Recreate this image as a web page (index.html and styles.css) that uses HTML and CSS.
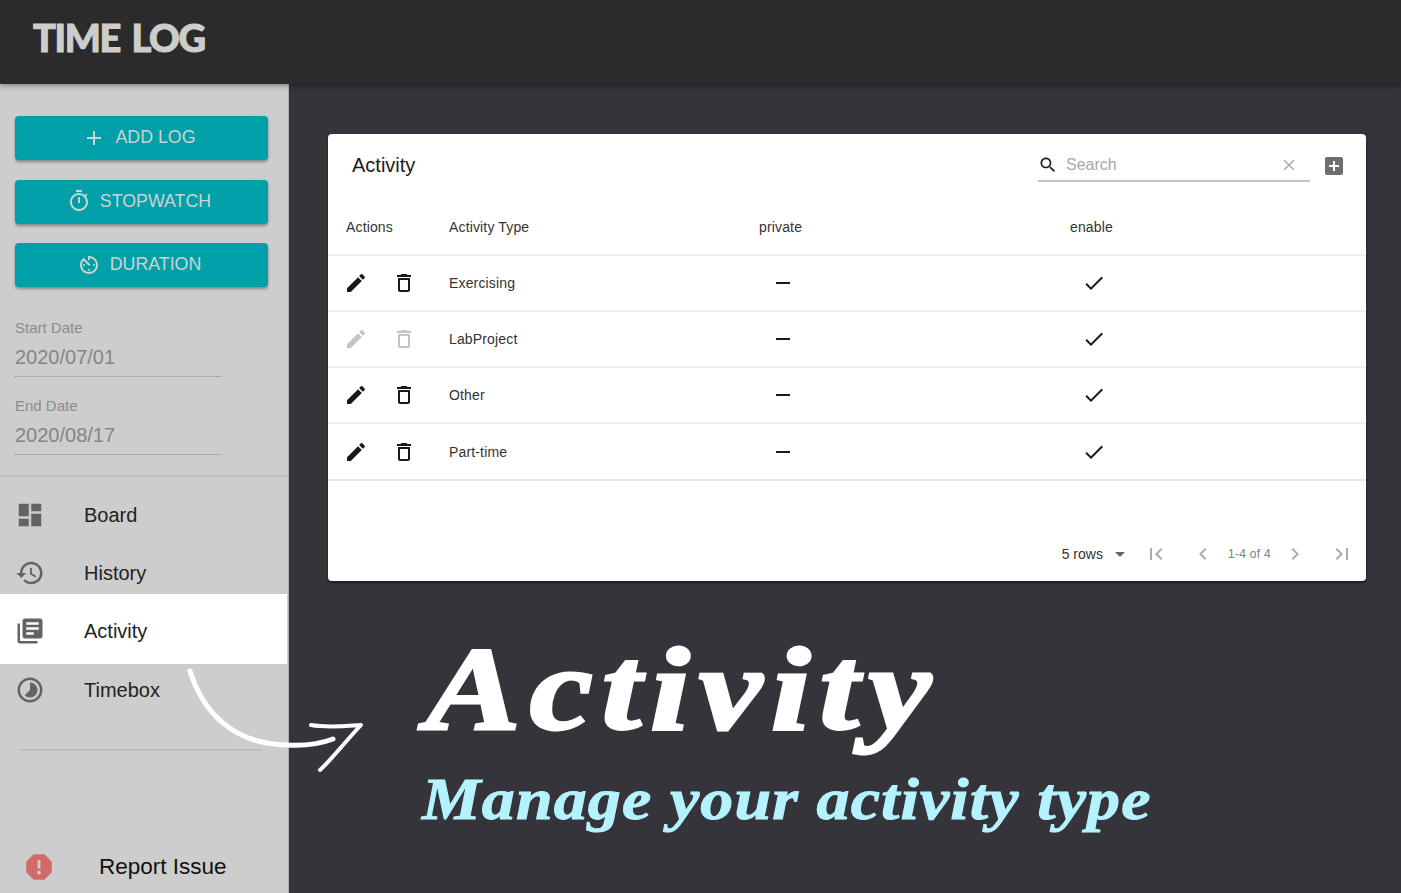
FILE: index.html
```html
<!DOCTYPE html>
<html lang="en">
<head>
  <meta charset="UTF-8" />
  <meta name="viewport" content="width=device-width, initial-scale=1.0" />
  <title>Time Log</title>
  <link rel="stylesheet" href="styles.css">
</head>
<body>
  <header class="topbar">
    <div class="logo">TIME LOG</div>
  </header>

  <div class="layout">
    <aside class="sidebar">
      <div class="actions">
        <button class="action-btn">
          <svg class="btn-icon" viewBox="0 0 24 24"><path d="M19 13h-6v6h-2v-6H5v-2h6V5h2v6h6v2z"/></svg>
          ADD LOG
        </button>
        <button class="action-btn">
          <svg class="btn-icon" viewBox="0 0 24 24"><path d="M15 1H9v2h6V1zm-4 13h2V8h-2v6zm8.03-6.61l1.42-1.42c-.43-.51-.9-.99-1.41-1.41l-1.42 1.42C16.07 4.74 14.12 4 12 4c-4.97 0-9 4.03-9 9s4.02 9 9 9 9-4.03 9-9c0-2.12-.74-4.07-1.97-5.61zM12 20c-3.87 0-7-3.13-7-7s3.13-7 7-7 7 3.13 7 7-3.13 7-7 7z"/></svg>
          STOPWATCH
        </button>
        <button class="action-btn">
          <svg class="btn-icon" viewBox="0 0 24 24"><path d="M11 17c0 .55.45 1 1 1s1-.45 1-1-.45-1-1-1-1 .45-1 1zm0-14v4h2V5.08c3.39.49 6 3.39 6 6.92 0 3.87-3.13 7-7 7s-7-3.13-7-7c0-1.68.59-3.22 1.58-4.42L12 13l1.41-1.41-6.8-6.8v.02C4.42 6.45 3 9.05 3 12c0 4.97 4.02 9 9 9 4.97 0 9-4.03 9-9s-4.03-9-9-9h-1zm7 9c0-.55-.45-1-1-1s-1 .45-1 1 .45 1 1 1 1-.45 1-1zM6 12c0 .55.45 1 1 1s1-.45 1-1-.45-1-1-1-1 .45-1 1z"/></svg>
          DURATION
        </button>
      </div>

      <div class="dates">
        <div class="date-field">
          <div class="date-label">Start Date</div>
          <div class="date-value">2020/07/01</div>
        </div>
        <div class="date-field">
          <div class="date-label">End Date</div>
          <div class="date-value">2020/08/17</div>
        </div>
      </div>

      <nav class="nav">
        <div class="nav-item">
          <svg class="nav-icon" viewBox="0 0 24 24"><path d="M3 13h8V3H3v10zm0 8h8v-6H3v6zm10 0h8V11h-8v10zm0-18v6h8V3h-8z"/></svg>
          <span>Board</span>
        </div>
        <div class="nav-item">
          <svg class="nav-icon" viewBox="0 0 24 24"><path d="M13 3c-4.97 0-9 4.03-9 9H1l3.89 3.89.07.14L9 12H6c0-3.87 3.13-7 7-7s7 3.13 7 7-3.13 7-7 7c-1.93 0-3.68-.79-4.94-2.06l-1.42 1.42C8.27 19.99 10.51 21 13 21c4.97 0 9-4.03 9-9s-4.03-9-9-9zm-1 5v5l4.28 2.54.72-1.21-3.5-2.08V8H12z"/></svg>
          <span>History</span>
        </div>
        <div class="nav-item active">
          <svg class="nav-icon" viewBox="0 0 24 24"><path d="M4 6H2v14c0 1.1.9 2 2 2h14v-2H4V6zm16-4H8c-1.1 0-2 .9-2 2v12c0 1.1.9 2 2 2h12c1.1 0 2-.9 2-2V4c0-1.1-.9-2-2-2zm-1 9H9V9h10v2zm-4 4H9v-2h6v2zm4-8H9V5h10v2z"/></svg>
          <span>Activity</span>
        </div>
        <div class="nav-item">
          <svg class="nav-icon" viewBox="0 0 24 24"><path d="M16.24 7.76C15.07 6.59 13.54 6 12 6v6l-4.24 4.24c2.34 2.34 6.14 2.34 8.49 0 2.34-2.34 2.34-6.14-.01-8.48zM12 2C6.48 2 2 6.48 2 12s4.48 10 10 10 10-4.48 10-10S17.52 2 12 2zm0 18c-4.42 0-8-3.58-8-8s3.58-8 8-8 8 3.58 8 8-3.58 8-8 8z"/></svg>
          <span>Timebox</span>
        </div>
      </nav>

      <hr class="nav-rule">

      <div class="report">
        <svg class="report-icon" viewBox="0 0 24 24"><path d="M15.73 3H8.27L3 8.27v7.46L8.27 21h7.46L21 15.73V8.27L15.73 3zM12 17.3c-.72 0-1.3-.58-1.3-1.3 0-.72.58-1.3 1.3-1.3.72 0 1.3.58 1.3 1.3 0 .72-.58 1.3-1.3 1.3zm1-4.3h-2V7h2v6z"/></svg>
        <span>Report Issue</span>
      </div>
    </aside>

    <main class="content">
      <section class="card">
        <div class="toolbar">
          <h2 class="card-title">Activity</h2>
          <div class="search">
            <svg class="search-icon" viewBox="0 0 24 24"><path d="M15.5 14h-.79l-.28-.27C15.41 12.59 16 11.11 16 9.5 16 5.91 13.09 3 9.5 3S3 5.91 3 9.5 5.91 16 9.5 16c1.61 0 3.09-.59 4.23-1.57l.27.28v.79l5 4.99L20.49 19l-4.99-5zm-6 0C7.01 14 5 11.99 5 9.5S7.01 5 9.5 5 14 7.01 14 9.5 11.99 14 9.5 14z"/></svg>
            <span class="search-text">Search</span>
            <svg class="clear-icon" viewBox="0 0 24 24"><path d="M19 6.41L17.59 5 12 10.59 6.41 5 5 6.41 10.59 12 5 17.59 6.41 19 12 13.41 17.59 19 19 17.59 13.41 12z"/></svg>
          </div>
          <svg class="add-icon" viewBox="0 0 24 24"><path d="M19 3H5c-1.11 0-2 .9-2 2v14c0 1.1.89 2 2 2h14c1.1 0 2-.9 2-2V5c0-1.1-.9-2-2-2zm-2 10h-4v4h-2v-4H7v-2h4V7h2v4h4v2z"/></svg>
        </div>

        <table class="grid">
          <thead>
            <tr>
              <th class="col-actions">Actions</th>
              <th class="col-type">Activity Type</th>
              <th class="col-flag">private</th>
              <th>enable</th>
            </tr>
          </thead>
          <tbody>
            <tr>
              <td class="cell-actions">
                <svg class="icon" viewBox="0 0 24 24"><path d="M3 17.25V21h3.75L17.81 9.94l-3.75-3.75L3 17.25zM20.71 7.04c.39-.39.39-1.02 0-1.41l-2.34-2.34c-.39-.39-1.02-.39-1.41 0l-1.83 1.83 3.75 3.75 1.83-1.83z"/></svg>
                <svg class="icon" viewBox="0 0 24 24"><path d="M6 19c0 1.1.9 2 2 2h8c1.1 0 2-.9 2-2V7H6v12zM8 9h8v10H8V9zm7.5-5l-1-1h-5l-1 1H5v2h14V4z"/></svg>
              </td>
              <td>Exercising</td>
              <td class="cell-flag"><svg class="icon" viewBox="0 0 24 24"><path d="M19 13H5v-2h14v2z"/></svg></td>
              <td class="cell-flag"><svg class="icon" viewBox="0 0 24 24"><path d="M9 16.17L4.83 12l-1.42 1.41L9 19 21 7l-1.41-1.41z"/></svg></td>
            </tr>
            <tr>
              <td class="cell-actions disabled">
                <svg class="icon" viewBox="0 0 24 24"><path d="M3 17.25V21h3.75L17.81 9.94l-3.75-3.75L3 17.25zM20.71 7.04c.39-.39.39-1.02 0-1.41l-2.34-2.34c-.39-.39-1.02-.39-1.41 0l-1.83 1.83 3.75 3.75 1.83-1.83z"/></svg>
                <svg class="icon" viewBox="0 0 24 24"><path d="M6 19c0 1.1.9 2 2 2h8c1.1 0 2-.9 2-2V7H6v12zM8 9h8v10H8V9zm7.5-5l-1-1h-5l-1 1H5v2h14V4z"/></svg>
              </td>
              <td>LabProject</td>
              <td class="cell-flag"><svg class="icon" viewBox="0 0 24 24"><path d="M19 13H5v-2h14v2z"/></svg></td>
              <td class="cell-flag"><svg class="icon" viewBox="0 0 24 24"><path d="M9 16.17L4.83 12l-1.42 1.41L9 19 21 7l-1.41-1.41z"/></svg></td>
            </tr>
            <tr>
              <td class="cell-actions">
                <svg class="icon" viewBox="0 0 24 24"><path d="M3 17.25V21h3.75L17.81 9.94l-3.75-3.75L3 17.25zM20.71 7.04c.39-.39.39-1.02 0-1.41l-2.34-2.34c-.39-.39-1.02-.39-1.41 0l-1.83 1.83 3.75 3.75 1.83-1.83z"/></svg>
                <svg class="icon" viewBox="0 0 24 24"><path d="M6 19c0 1.1.9 2 2 2h8c1.1 0 2-.9 2-2V7H6v12zM8 9h8v10H8V9zm7.5-5l-1-1h-5l-1 1H5v2h14V4z"/></svg>
              </td>
              <td>Other</td>
              <td class="cell-flag"><svg class="icon" viewBox="0 0 24 24"><path d="M19 13H5v-2h14v2z"/></svg></td>
              <td class="cell-flag"><svg class="icon" viewBox="0 0 24 24"><path d="M9 16.17L4.83 12l-1.42 1.41L9 19 21 7l-1.41-1.41z"/></svg></td>
            </tr>
            <tr>
              <td class="cell-actions">
                <svg class="icon" viewBox="0 0 24 24"><path d="M3 17.25V21h3.75L17.81 9.94l-3.75-3.75L3 17.25zM20.71 7.04c.39-.39.39-1.02 0-1.41l-2.34-2.34c-.39-.39-1.02-.39-1.41 0l-1.83 1.83 3.75 3.75 1.83-1.83z"/></svg>
                <svg class="icon" viewBox="0 0 24 24"><path d="M6 19c0 1.1.9 2 2 2h8c1.1 0 2-.9 2-2V7H6v12zM8 9h8v10H8V9zm7.5-5l-1-1h-5l-1 1H5v2h14V4z"/></svg>
              </td>
              <td>Part-time</td>
              <td class="cell-flag"><svg class="icon" viewBox="0 0 24 24"><path d="M19 13H5v-2h14v2z"/></svg></td>
              <td class="cell-flag"><svg class="icon" viewBox="0 0 24 24"><path d="M9 16.17L4.83 12l-1.42 1.41L9 19 21 7l-1.41-1.41z"/></svg></td>
            </tr>
          </tbody>
        </table>

        <div class="pager">
          <span class="rows">5 rows</span>
          <svg class="pager-icon drop" viewBox="0 0 24 24"><path d="M7 10l5 5 5-5z"/></svg>
          <svg class="pager-icon" viewBox="0 0 24 24"><path d="M18.41 16.59L13.82 12l4.59-4.59L17 6l-6 6 6 6zM6 6h2v12H6z"/></svg>
          <svg class="pager-icon" viewBox="0 0 24 24"><path d="M15.41 7.41L14 6l-6 6 6 6 1.41-1.41L10.83 12z"/></svg>
          <span class="page-count">1-4 of 4</span>
          <svg class="pager-icon next" viewBox="0 0 24 24"><path d="M10 6L8.59 7.41 13.17 12l-4.58 4.59L10 18l6-6z"/></svg>
          <svg class="pager-icon" viewBox="0 0 24 24"><path d="M5.59 7.41L10.18 12l-4.59 4.59L7 18l6-6-6-6zM16 6h2v12h-2z"/></svg>
        </div>
      </section>

      <div class="promo">
        <div class="promo-title">Activity</div>
        <div class="promo-sub">Manage your activity type</div>
      </div>
    </main>
  </div>

  <!-- hand drawn arrow from the menu to the caption -->
  <svg class="arrow" viewBox="0 0 200 120">
    <path class="arrow-line" d="M10 7 C22 45 50 80 107 81 C125 82 140 80 153 75"/>
    <path class="arrow-head" d="M131 61 C148 64 165 62 181 61 C165 78 152 95 140 106"/>
  </svg>
</body>
</html>
```

FILE: styles.css
```css
* {
  box-sizing: border-box;
}
body {
  margin: 0;
  height: 893px;
  overflow: hidden;
  font-family: "Liberation Sans", Arial, sans-serif;
  background-color: #35343a;
}
.topbar {
  height: 84px;
  padding: 15px 0 0 33px;
  background-color: #2b2b2b;
  box-shadow: 0 2px 5px rgba(0, 0, 0, 0.35);
  position: relative;
}
.logo {
  font-family: Lato, sans-serif;
  font-weight: 900;
  font-size: 38px;
  line-height: 44px;
  letter-spacing: -1.4px;
  word-spacing: 4px;
  -webkit-text-stroke: 1px #cdcdcd;
  color: #cdcdcd;
}
.layout {
  display: flex;
  height: 809px;
}
.sidebar {
  width: 289px;
  flex-shrink: 0;
  padding-top: 32px;
  background-color: #cdcdcd;
  border-right: 1px solid #b0b0b0;
}
.actions {
  display: flex;
  flex-direction: column;
  gap: 19.5px;
  padding-left: 15px;
}
.action-btn {
  width: 253px;
  height: 44px;
  display: flex;
  align-items: center;
  justify-content: center;
  gap: 9px;
  padding: 0 5px 1px 0;
  border: none;
  border-radius: 4px;
  background-color: #00a0a8;
  color: #cdd2d2;
  font-family: "Liberation Sans", Arial, sans-serif;
  font-size: 17.8px;
  box-shadow: 0 2px 3px rgba(0, 0, 0, 0.35);
}
.btn-icon {
  width: 24px;
  height: 24px;
  fill: #cdd2d2;
}
.dates {
  padding: 31px 0 0 15px;
}
.date-field {
  width: 206px;
  height: 59px;
  border-bottom: 1px dotted #8c8c8c;
}
.date-field + .date-field {
  margin-top: 19px;
}
.date-label {
  font-size: 15px;
  line-height: 20px;
  color: #8c8c8c;
}
.date-value {
  margin-top: 7px;
  font-size: 20px;
  line-height: 24px;
  color: #858585;
}
.nav {
  margin-top: 20px;
  border-top: 2px solid #c0c0c0;
  padding-top: 9px;
}
.nav-item {
  height: 58px;
  display: flex;
  align-items: center;
  padding-left: 15px;
  font-size: 20px;
  color: #222;
}
.nav-item span {
  margin-left: 39px;
}
.nav-item.active {
  height: 70px;
  width: 287px;
  margin: -8px 0 -3px;
  padding-top: 4px;
  background-color: #fff;
}
.nav-icon {
  width: 30px;
  height: 30px;
  fill: #636363;
}
.nav-rule {
  width: 243px;
  margin: 30px 0 0 20px;
  border: none;
  border-top: 2px solid #bdbdbd;
}
.report {
  display: flex;
  align-items: center;
  margin-top: 99px;
  padding-left: 22px;
  font-size: 22.5px;
  color: #111;
}
.report span {
  margin-left: 43px;
}
.report-icon {
  width: 34px;
  height: 34px;
  fill: #d26a6a;
}
.content {
  flex: 1;
  padding: 50px 35px 0 39px;
}
.card {
  height: 447px;
  display: flex;
  flex-direction: column;
  background-color: #fff;
  border-radius: 4px;
  box-shadow: 0 2px 3px rgba(0, 0, 0, 0.5);
}
.toolbar {
  height: 65px;
  flex-shrink: 0;
  display: flex;
  align-items: center;
  padding: 0 20px 2px 24px;
}
.card-title {
  flex: 1;
  margin: 0;
  font-size: 20px;
  font-weight: 400;
  color: #1c1c1c;
}
.search {
  width: 272px;
  height: 32px;
  display: flex;
  align-items: center;
  margin-top: 1px;
  border-bottom: 2px solid #c4c4c4;
}
.search-icon {
  width: 20px;
  height: 20px;
  fill: #1f1f1f;
}
.search-text {
  flex: 1;
  margin-left: 8px;
  font-size: 16px;
  color: #a8a8a8;
}
.clear-icon {
  width: 18px;
  height: 18px;
  margin-right: 12px;
  fill: #a8a8a8;
}
.add-icon {
  width: 24px;
  height: 24px;
  margin-left: 12px;
  fill: #6e6e6e;
}
.grid {
  width: 100%;
  border-collapse: collapse;
  table-layout: fixed;
  font-size: 14px;
  letter-spacing: 0.15px;
  color: #333;
}
.grid th {
  height: 56px;
  padding: 0;
  font-weight: 400;
  text-align: left;
  border-bottom: 2px solid #eee;
}
.grid td {
  height: 56px;
  padding: 0;
  border-bottom: 2px solid #eee;
}
.grid tbody tr:last-child td {
  height: 57px;
  border-bottom-color: #e8e8e8;
}
.col-actions {
  width: 121px;
  padding-left: 18px !important;
}
.col-type {
  width: 310px;
}
.col-flag {
  width: 311px;
}
.cell-actions {
  padding-left: 16px !important;
}
.cell-actions .icon + .icon {
  margin-left: 20px;
}
.cell-flag {
  padding-left: 12px !important;
}
.icon {
  display: inline-block;
  width: 24px;
  height: 24px;
  vertical-align: middle;
  fill: #1a1a1a;
}
.disabled .icon {
  fill: #c4c4c4;
}
.pager {
  display: flex;
  align-items: center;
  justify-content: flex-end;
  margin-top: auto;
  height: 56px;
  padding: 1px 12px 0 0;
}
.rows {
  font-size: 14px;
  color: #333;
}
.page-count {
  margin-left: 13px;
  font-size: 12px;
  letter-spacing: 0.3px;
  color: #808080;
}
.pager-icon {
  width: 24px;
  height: 24px;
  fill: #ababab;
  margin-left: 23px;
}
.pager-icon.next {
  margin-left: 12px;
}
.pager-icon.drop {
  margin: 0 -11px 0 5px;
  fill: #666;
}
.promo {
  margin-top: 49px;
  padding-left: 92px;
}
/* no brush font on hand, so a serif italic gets stretched and thickened */
.promo-title {
  width: fit-content;
  margin-left: 6px;
  font-family: "Liberation Serif", serif;
  font-weight: bold;
  font-style: italic;
  font-size: 118px;
  line-height: 120px;
  letter-spacing: 7.7px;
  -webkit-text-stroke: 3px #fff;
  color: #fff;
  transform: scaleX(1.2);
  transform-origin: left center;
}
.promo-sub {
  width: fit-content;
  margin: 14px 0 0 2px;
  font-family: "Liberation Serif", serif;
  font-weight: bold;
  font-style: italic;
  font-size: 60px;
  line-height: 70px;
  letter-spacing: 1px;
  -webkit-text-stroke: 1px #b5f2ff;
  color: #b5f2ff;
  transform: scaleX(1.1);
  transform-origin: left center;
}
.arrow {
  position: absolute;
  left: 180px;
  top: 664px;
  width: 200px;
  height: 120px;
}
.arrow-line,
.arrow-head {
  fill: none;
  stroke: #fff;
  stroke-linecap: round;
  stroke-linejoin: round;
}
.arrow-line {
  stroke-width: 5;
}
.arrow-head {
  stroke-width: 4;
}
```
